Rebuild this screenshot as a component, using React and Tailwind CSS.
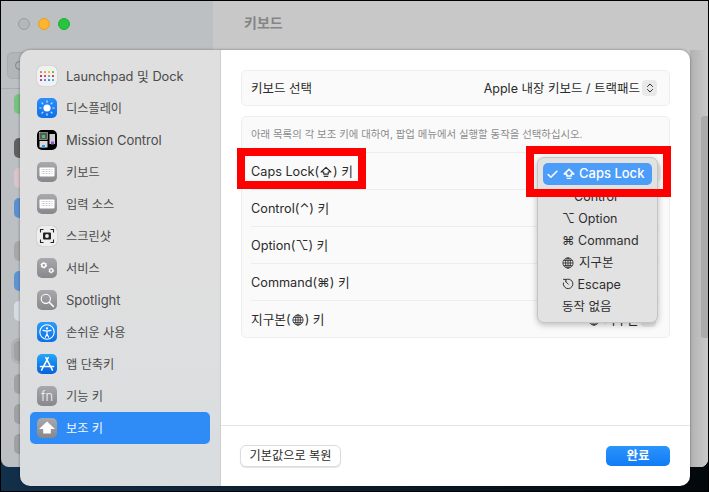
import React from 'react';
import { Check, ChevronsUpDown } from 'lucide-react';

const CapsIcon = ({ className = 'w-3 h-3', strokeWidth = 1.5 }) => (
  <svg viewBox="0 0 16 16" className={`inline-block ${className}`} fill="none" stroke="currentColor" strokeWidth={strokeWidth} strokeLinejoin="round">
    <path d="M8 1.8 14.5 8H11v2.8H5V8H1.5Z" />
    <rect x="5" y="13" width="6" height="1.6" fill="currentColor" stroke="none" />
  </svg>
);

const GlobeIcon = ({ className = 'w-3 h-3' }) => (
  <svg viewBox="0 0 16 16" className={`inline-block ${className}`} fill="none" stroke="currentColor" strokeWidth="1.1">
    <circle cx="8" cy="8" r="6.8" />
    <ellipse cx="8" cy="8" rx="3.2" ry="6.8" />
    <path d="M8 1.2v13.6M1.2 8h13.6M2.2 4.6h11.6M2.2 11.4h11.6" />
  </svg>
);

const EscapeIcon = () => (
  <svg viewBox="0 0 16 16" className="inline-block w-3 h-3 align-[-1px]" fill="none" stroke="currentColor" strokeWidth="1.3" strokeLinecap="round">
    <path d="M4.6 2.4A6.4 6.4 0 1 1 1.8 6.6" />
    <path d="M2 1.8h3.2v3.2M4.8 4.6 8.4 8.2" />
  </svg>
);

const IconBox = ({ className, children }) => (
  <div className={`w-5 h-5 rounded-[5px] shrink-0 flex items-center justify-center overflow-hidden ${className}`}>
    {children}
  </div>
);

const grayBox = 'bg-gradient-to-b from-[#a9a9ad] to-[#88888c]';

const launchDots = [
  '#9a9a9a', '#f2a81d', '#e8c31a', '#5fbf45',
  '#d82a3c', '#e03a7c', '#9a9a9a', '#e0344c',
  '#a03cc8', '#3a8ce8', '#3a8ce8', '#2cc4c4',
];

const LaunchpadIcon = () => (
  <IconBox className="bg-[#f1f1f1] shadow-[0_0_1px_rgba(0,0,0,0.35)]">
    <div className="grid grid-cols-4 gap-[1.5px]">
      {launchDots.map((c, i) => (
        <span key={i} className="w-[2.5px] h-[2.5px] rounded-[0.5px]" style={{ background: c }} />
      ))}
    </div>
  </IconBox>
);

const DisplayIcon = () => (
  <IconBox className="bg-gradient-to-b from-[#2a8ffb] to-[#0f6fe8]">
    <svg viewBox="0 0 20 20" className="w-5 h-5">
      <circle cx="10" cy="10" r="3.6" fill="#fff" />
      <g stroke="#cfe5ff" strokeWidth="1.2" strokeLinecap="round">
        <path d="M10 2.8v1.4M10 15.8v1.4M2.8 10h1.4M15.8 10h1.4M4.9 4.9l1 1M14.1 14.1l1 1M4.9 15.1l1-1M14.1 5.9l1-1" />
      </g>
    </svg>
  </IconBox>
);

const MissionIcon = () => (
  <IconBox className="bg-black">
    <svg viewBox="0 0 20 20" className="w-5 h-5">
      <rect x="2.5" y="2.5" width="8" height="7" fill="#5a5a5a" stroke="#ddd" strokeWidth="0.5" />
      <rect x="5" y="5" width="3" height="3" fill="#3ecf5a" />
      <rect x="12.5" y="4" width="5.5" height="10" fill="#cfcfcf" />
      <rect x="14" y="11.5" width="3" height="3" fill="#9a4fe0" />
      <rect x="2.5" y="11" width="8" height="6.5" fill="#d8d8d8" />
      <rect x="5" y="15" width="3" height="3" fill="#2a9cf0" />
    </svg>
  </IconBox>
);

const KeyboardIcon = () => (
  <IconBox className={grayBox}>
    <svg viewBox="0 0 20 20" className="w-5 h-5">
      <rect x="2.5" y="5.5" width="15" height="9" rx="1" fill="#fff" />
      <path d="M4.5 7.5h11M4.5 9.5h11M4.5 11.5h11" stroke="#c4c4c4" strokeWidth="0.9" strokeDasharray="1 0.5" />
    </svg>
  </IconBox>
);

const ScreenshotIcon = () => (
  <IconBox className="bg-[#eeeeee] shadow-[0_0_1px_rgba(0,0,0,0.4)]">
    <svg viewBox="0 0 20 20" className="w-5 h-5" fill="none">
      <path d="M3.5 6.5v-3h3M13.5 3.5h3v3M16.5 13.5v3h-3M6.5 16.5h-3v-3" stroke="#222" strokeWidth="1.1" />
      <rect x="6" y="6.5" width="8" height="7" rx="1" fill="#222" />
      <circle cx="10" cy="10" r="1.9" fill="#eee" />
    </svg>
  </IconBox>
);

const Gear = ({ cx, cy, r }) => (
  <g>
    <circle cx={cx} cy={cy} r={r} fill="none" stroke="#fff" strokeWidth={r * 0.75} />
    <circle cx={cx} cy={cy} r={r * 1.42} fill="none" stroke="#fff" strokeWidth={r * 0.5} strokeDasharray={`${r * 0.7} ${r * 0.8}`} />
  </g>
);

const ServicesIcon = () => (
  <IconBox className={grayBox}>
    <svg viewBox="0 0 20 20" className="w-5 h-5">
      <Gear cx={6.8} cy={7.2} r={2} />
      <Gear cx={14.2} cy={12.6} r={1.7} />
    </svg>
  </IconBox>
);

const SpotlightIcon = () => (
  <IconBox className={grayBox}>
    <svg viewBox="0 0 20 20" className="w-5 h-5" fill="none" stroke="#fff" strokeLinecap="round">
      <circle cx="8.8" cy="8.8" r="4.6" strokeWidth="1.1" />
      <path d="M12.2 12.2l4.2 4.2" strokeWidth="1.5" />
    </svg>
  </IconBox>
);

const AccessIcon = () => (
  <IconBox className="bg-gradient-to-b from-[#2a9bfc] to-[#0c6fe6]">
    <svg viewBox="0 0 20 20" className="w-5 h-5" fill="none" stroke="#fff">
      <circle cx="10" cy="10" r="7.2" strokeWidth="1.1" />
      <circle cx="10" cy="6.4" r="1.1" fill="#fff" stroke="none" />
      <path d="M6 8.4l4 .8 4-.8M10 9.2v2.8M10 12l-1.7 3.2M10 12l1.7 3.2" strokeWidth="1.2" strokeLinecap="round" />
    </svg>
  </IconBox>
);

const AppStoreIcon = () => (
  <IconBox className="bg-gradient-to-b from-[#27a5fb] to-[#0c5fdc]">
    <svg viewBox="0 0 20 20" className="w-5 h-5" fill="none" stroke="#fff" strokeWidth="1.5" strokeLinecap="round">
      <path d="M11.2 3.6 5.6 14.2M8.8 3.6l5.6 10.6M3.4 12.6h13.2M4.6 16.2l1-2M15.4 16.2l-1-2" />
    </svg>
  </IconBox>
);

const FnIcon = () => (
  <IconBox className={grayBox}>
    <span className="text-[13px] leading-none text-[#f4f4f4] font-light">fn</span>
  </IconBox>
);

const ModifierIcon = () => (
  <IconBox className={grayBox}>
    <svg viewBox="0 0 20 20" className="w-5 h-5">
      <path d="M10 3.6 18 11h-4.2v4.6H6.2V11H2Z" fill="#fff" />
    </svg>
  </IconBox>
);

// Korean labels run narrower in the reference than the Latin ones
const latin = 'text-[13px]';
const korean = 'text-[12.2px]';

const sidebarItems = [
  { label: 'Launchpad 및 Dock', icon: <LaunchpadIcon />, size: 'text-[12.8px]' },
  { label: '디스플레이', icon: <DisplayIcon />, size: korean },
  { label: 'Mission Control', icon: <MissionIcon />, size: latin },
  { label: '키보드', icon: <KeyboardIcon />, size: korean },
  { label: '입력 소스', icon: <KeyboardIcon />, size: korean },
  { label: '스크린샷', icon: <ScreenshotIcon />, size: korean },
  { label: '서비스', icon: <ServicesIcon />, size: korean },
  { label: 'Spotlight', icon: <SpotlightIcon />, size: latin },
  { label: '손쉬운 사용', icon: <AccessIcon />, size: korean },
  { label: '앱 단축키', icon: <AppStoreIcon />, size: korean },
  { label: '기능 키', icon: <FnIcon />, size: korean },
  { label: '보조 키', icon: <ModifierIcon />, size: korean, active: true },
];

const rows = [
  { label: <>Caps Lock(<CapsIcon className="w-3 h-3 mx-px align-[-2px]" />) 키</> },
  { label: 'Control(⌃) 키' },
  { label: 'Option(⌥) 키' },
  { label: 'Command(⌘) 키' },
  { label: <>지구본(<GlobeIcon className="w-3 h-3 mx-px align-[-2px]" />) 키</>, value: <><GlobeIcon className="w-3 h-3 mr-1 align-[-2px]" />지구본</> },
];

const menuItems = [
  { label: 'Control', pl: 'pl-[36px]' },
  { label: <>⌥ Option</>, pl: 'pl-[24px]' },
  { label: <>⌘ Command</>, pl: 'pl-[24px]' },
  { label: <><GlobeIcon className="w-3 h-3 mr-[5px] align-[-2px]" />지구본</>, pl: 'pl-[24px]' },
  { label: <><EscapeIcon /> Escape</>, pl: 'pl-[24px]' },
  { label: '동작 없음', pl: 'pl-[24px]' },
];

const SelectChevron = () => (
  <span className="ml-[2px] w-[15px] h-4 rounded-[4px] bg-[#e9e9e9] flex items-center justify-center">
    <ChevronsUpDown className="w-3 h-3 text-[#333]" strokeWidth={2} />
  </span>
);

// icons of the window behind the sheet, only their left edge shows
const backIcons = [
  'mt-[5px] bg-[#76c27f]',
  'mt-[24px] bg-[#5f5f62]',
  'mt-[10px] bg-[#d9c4c8]',
  'mt-[10px] bg-[#5b8fd0]',
  'mt-[23px] bg-[#a6a8aa]',
  'mt-[10px] bg-[#5f94d4]',
  'mt-[10px] bg-[#d5dde2]',
  'mt-[20px] bg-[#a0a1a3] shadow-[0_0_0_3px_#b0b3b5]',
  'mt-[13px] bg-[#a0a1a3]',
  'mt-[10px] bg-[#a0a1a3]',
  'mt-[10px] bg-[#a0a1a3]',
];

const BackWindow = () => (
  <div className="flex h-[466px] rounded-b-[8px] overflow-hidden">
    <div className="w-[212px] bg-[#bcc0c3]">
      <div className="flex gap-2 pl-[17px] pt-[17px] h-[51px]">
        <span className="w-3 h-3 rounded-full bg-[#b4b8bb] border border-[#9a9ea1]" />
        <span className="w-3 h-3 rounded-full bg-[#fdb42e] border border-[#e5a028]" />
        <span className="w-3 h-3 rounded-full bg-[#26c43f] border border-[#20ae36]" />
      </div>
      <div className="h-[37px] border-b border-[#a9adb0] pl-[6px]">
        <div className="h-[27px] w-[40px] flex items-center pl-[7px] rounded-[5px] bg-[#b3b6b9] border border-[#a9acaf]">
          <span className="w-[9px] h-[9px] rounded-full border border-[#7f8285]" />
        </div>
      </div>
      <div className="flex flex-col pl-[13px]">
        {backIcons.map((c, i) => (
          <div key={i} className={`w-5 h-5 rounded-[5px] shrink-0 ${c}`} />
        ))}
      </div>
    </div>
    <div className="flex-1 flex flex-col bg-[#c8c8c8]">
      <div className="h-[49px] pl-[31px] pt-[12px] text-[14px] leading-[20px] font-semibold text-[#858585]">키보드</div>
      <div className="flex-1 flex justify-end bg-gradient-to-r from-[#c8c8c8] to-[#cacaca]">
        <div className="w-[18px] pt-[66px] bg-gradient-to-r from-[#b2b2b2] to-[#c9c9c9] flex justify-end">
          <div className="w-[7px] h-[222px] rounded-l-[3px] bg-[#ababab]" />
        </div>
      </div>
    </div>
  </div>
);

export default function App() {
  return (
    <div className="relative w-[709px] h-[492px] overflow-hidden border border-black bg-gradient-to-r from-[#12304a] via-[#0b1d2c] to-[#03080c] font-['Inter','Noto_Sans_CJK_KR','DejaVu_Sans',sans-serif]">
      <BackWindow />

      {/* settings sheet */}
      <div className="absolute left-[19px] top-[49px] w-[670px] h-[436px] flex rounded-[10px] overflow-hidden shadow-[0_0_3px_rgba(0,0,0,0.4)]">
        <div className="w-[201px] shrink-0 px-[10px] pt-[10px] border-r border-[#cfcfcf] bg-gradient-to-b from-[#dfdfdf] via-[#dfdfdf] to-[#d9dde0]">
          {sidebarItems.map((item, i) => (
            <div
              key={i}
              className={`h-8 flex items-center gap-[9px] pl-[7px] rounded-[5px] ${item.size} ${item.active ? 'bg-[#2f8cf6] text-[#f4f8ff]' : 'text-[#4b4b4b]'}`}
            >
              {item.icon}
              <span className="pt-[2px]">{item.label}</span>
            </div>
          ))}
        </div>

        <div className="flex-1 flex flex-col bg-white">
          <div className="flex-1 pl-5 pr-5 pt-5">
            <div className="h-9 flex items-center justify-between pl-[9px] pr-3 rounded-[5px] bg-[#fafafa] border border-[#ededed] text-[12.5px] text-[#2b2b2b]">
              <span className="pt-[2px]">키보드 선택</span>
              <div className="flex items-center">
                <span className="pt-[2px]">Apple 내장 키보드 / 트랙패드</span>
                <SelectChevron />
              </div>
            </div>

            <div className="mt-[10px] rounded-[5px] bg-[#fafafa] border border-[#ededed]">
              <div className="h-9 flex items-center pl-[9px] text-[10.4px] text-[#8c8c8c] border-b border-[#ededed]">
                아래 목록의 각 보조 키에 대하여, 팝업 메뉴에서 실행할 동작을 선택하십시오.
              </div>
              {rows.map((row, i) => (
                <div key={i} className="ml-[9px] mr-[10px] pr-[3px] h-[37px] flex items-center justify-between border-b border-[#ededed] last:border-b-0 last:h-9 text-[12.7px] text-[#2b2b2b]">
                  <span className="pt-[2px]">{row.label}</span>
                  {row.value && (
                    <div className="flex items-center">
                      <span className="pt-[2px]">{row.value}</span>
                      <SelectChevron />
                    </div>
                  )}
                </div>
              ))}
            </div>
          </div>

          <div className="h-[61px] border-t border-[#e4e4e4] flex justify-between items-start pl-[19px] pr-5 pt-[19px]">
            <button className="h-[22px] w-[101px] rounded-[6px] bg-white border border-[#dcdcdc] shadow-[0_1px_1px_rgba(0,0,0,0.12)] text-[12.2px] text-[#2b2b2b]">
              기본값으로 복원
            </button>
            <button className="mt-px h-5 w-16 rounded-[5px] bg-gradient-to-b from-[#2b93fb] to-[#0f7cf6] text-[12.5px] font-semibold text-white">
              완료
            </button>
          </div>
        </div>
      </div>

      {/* pressed select button, shows just past the popup's right edge */}
      <div className="absolute left-[620px] top-[162px] w-[40px] h-[19px] rounded-[5px] bg-[#e8e8e8]" />

      {/* popup menu */}
      <div className="absolute left-[536px] top-[156px] w-[121px] h-[166px] rounded-[7px] bg-[#e2e2e2] border border-[#c4c4c4] shadow-[0_2px_6px_rgba(0,0,0,0.25)] p-[5px] text-[12.5px] text-[#2e2e2e]">
        <div className="h-[22px] flex items-center pl-[3px] gap-[4px] rounded-[5px] bg-[#4c9dfa] text-white text-[13px] font-medium">
          <Check className="w-[13px] h-[13px]" strokeWidth={3} />
          <CapsIcon className="w-3 h-3" strokeWidth={2} />
          <span>Caps Lock</span>
        </div>
        <div className="-mx-[5px] mt-px">
          {menuItems.map((m, i) => (
            <div key={i} className={`h-[22px] leading-[22px] whitespace-nowrap ${m.pl}`}>{m.label}</div>
          ))}
        </div>
      </div>

      {/* red annotation boxes */}
      <div className="absolute left-[236px] top-[147px] w-[129px] h-[41px] border-8 border-[#ff0000]" />
      <div className="absolute left-[525px] top-[145px] w-[145px] h-[51px] border-8 border-[#ff0000]" />
    </div>
  );
}
